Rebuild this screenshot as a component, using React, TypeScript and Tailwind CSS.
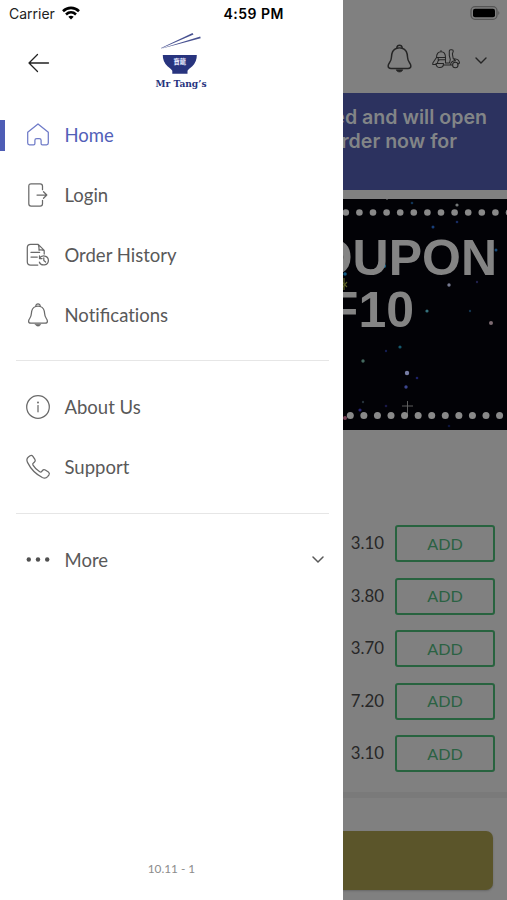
import type { ReactNode } from "react";

const LATO = "font-['Lato','Liberation_Sans',sans-serif]";
const INTER = "font-['Inter','Liberation_Sans',sans-serif]";

function Icon({ children, className = "" }: { children: ReactNode; className?: string }) {
  return (
    <svg
      viewBox="0 0 24 24"
      className={"h-6 w-6 shrink-0 overflow-visible " + className}
      fill="none"
      stroke="currentColor"
      strokeWidth="1.25"
      strokeLinecap="round"
      strokeLinejoin="round"
    >
      {children}
    </svg>
  );
}

function BellShape() {
  return (
    <>
      <path d="M9.800 3.500C6 4.600 5.400 7.800 5.300 11.100 5.200 15.200 2.600 15.600 2.600 18.200c0 1.400 1 2 2.300 2h14.200c1.300 0 2.300-.6 2.300-2 0-2.600-2.600-3-2.700-7.100-.1-3.300-.7-6.500-4.500-7.600Q12 2.900 9.800 3.500Z" />
      <path d="M9.800 3.300C9.700.2 14.300.2 14.200 3.300" />
      <path d="M9.300 21.300h5.400c-.5 2.500-4.900 2.500-5.400 0Z" fill="currentColor" strokeWidth=".5" />
    </>
  );
}

const icons = {
  home: (
    <Icon>
      <path d="M1.700 9.200 12 .9l10.300 8.300v10.900q0 1.700-1.700 1.700h-4.200q-1.300 0-1.300-1.300v-3.200q0-1.800-1.800-1.800h-2.600q-1.800 0-1.800 1.800v3.200q0 1.300-1.300 1.300H3.400q-1.700 0-1.700-1.700Z" />
    </Icon>
  ),
  login: (
    <Icon>
      <path d="M16.500 6.700V3.200q0-2.400-2.300-2.400H5.100Q2.800.8 2.800 3.200v17.600q0 2.400 2.300 2.400h9.100q2.300 0 2.300-2.400v-3.500M11 12h9.800M17.500 8.700l3.300 3.300-3.300 3.300" />
    </Icon>
  ),
  history: (
    <Icon>
      <path d="M11.800 22H4.600Q1.300 22 1.300 18.800V4.700Q1.300 1.400 4.600 1.400h7.600l6 6V11M12.200 1.400c1.200 3.600.8 4.600.8 5.800 1.600-.6 3.400-.3 5.200.3M5 9.400h8.600M5 14.100h6.300" />
      <path d="M13.600 15.200c2.100-3.700 8.600-2.700 8.800 2 .1 5.400-7.300 6.300-9 2M13.500 12.900v2.700h2.600M17.800 14.800v2.700l1.800 1.500" />
    </Icon>
  ),
  bell: (
    <Icon>
      <BellShape />
    </Icon>
  ),
  info: (
    <Icon>
      <circle cx="12" cy="12" r="11.300" />
      <path d="M12 10.500v6.300" />
      <circle cx="12" cy="7.400" r=".4" fill="currentColor" />
    </Icon>
  ),
  phone: (
    <Icon>
      <path d="M2.400 2.100 4.100.8c.9-.6 2.100-.4 2.800.5l2 3.100c.6.9.3 2.100-.6 2.800L7.400 8c-.8.6-.9 1.300-.4 2.100 1.800 2.900 3.800 5 6.700 6.700.8.5 1.600.3 2.100-.4l.7-.9c.7-.9 1.800-1.100 2.800-.5l3.100 2c1 .7 1.200 1.800.6 2.800l-1.400 1.800c-1.400 1.700-3.400 1.800-5.300.9C9.100 18.800 5.200 14.900 1.500 7.400c-.9-1.900-.8-3.900.9-5.300Z" />
    </Icon>
  ),
  more: (
    <Icon className="text-[#505050]">
      <g fill="currentColor" stroke="none">
        <circle cx="2.800" cy="11.500" r="2.200" />
        <circle cx="12" cy="11.500" r="2.200" />
        <circle cx="21.200" cy="11.500" r="2.200" />
      </g>
    </Icon>
  ),
};

function MenuItem({ icon, label, active = false, expandable = false }: { icon: ReactNode; label: ReactNode; active?: boolean; expandable?: boolean }) {
  return (
    <div className={"flex h-[60px] items-center " + (active ? "text-[#5260b8]" : "text-[#595959]")}>
      <div className={"h-[31px] w-[5px] shrink-0 " + (active ? "bg-[#4e5db5]" : "")} />
      <div className={"ml-[21px] flex " + (active ? "text-[#6f7bc8]" : "text-[#6a6a6a]")}>{icon}</div>
      <span className={"ml-[14.500px] text-[18.500px] leading-6 [font-variant-ligatures:none] " + LATO}>{label}</span>
      {expandable && (
        <svg viewBox="0 0 12 8" className="mr-[19px] ml-auto h-2 w-3" fill="none" stroke="currentColor" strokeWidth="1.500" strokeLinecap="round">
          <path d="m1 1 5 5 5-5" />
        </svg>
      )}
    </div>
  );
}

function Logo() {
  return (
    <svg viewBox="0 0 56 60" className="h-[60px] w-14" fill="#28347e">
      <path d="m8 17 31.500-15 1 1.500L8 17.500Zm2 0 37.200-11.500.5 1.700L9 17.500Z" opacity=".85" />
      <path d="M9.800 24h34q.2 6.500-4.500 11.200-3.800 2.800-4.800 4.600v3H19.300v-3q-1-1.800-4.800-4.600Q9.600 30.500 9.800 24Z" />
      <text x="20.500" y="32.700" fill="#e8eaff" fontSize="6.300" fontWeight="700" fontFamily="'Noto Sans CJK TC', sans-serif">
        寶龍
      </text>
      <text x="2.500" y="56" fontSize="10" fontWeight="700" fontFamily="'DejaVu Serif', serif" textLength="51" lengthAdjust="spacingAndGlyphs">
        Mr Tang’s
      </text>
    </svg>
  );
}

function Drawer() {
  return (
    <aside className="flex w-[343px] shrink-0 flex-col bg-white">
      <div className={"flex h-7 items-center pl-[9px] text-black " + INTER}>
        <span className="pb-px text-[14px] text-[#222]">Carrier</span>
        <svg viewBox="0 0 18 14" className="mb-[2px] ml-[7px] h-[14px] w-[18px]" fill="none" stroke="currentColor" strokeWidth="2.600">
          <path d="M1 5.200c4.600-4.400 11.400-4.400 16 0M4 8.500c3-2.800 7-2.800 10 0" />
          <path d="M6.300 10.800c1.700-1.500 3.700-1.500 5.400 0L9 13.500Z" fill="currentColor" stroke="none" />
        </svg>
        <span className="mr-[59px] ml-auto pb-px text-[14px] font-semibold tracking-[0.500px]">4:59 PM</span>
      </div>
      <header className="flex h-[77px] items-start">
        <svg viewBox="0 0 22 20" className="mt-[25px] ml-7 h-5 w-[22px]" fill="none" stroke="#222" strokeWidth="1.300" strokeLinecap="round" strokeLinejoin="round">
          <path d="M20.500 10H1M9.500 1.500 1 10l8.500 8.500" />
        </svg>
        <div className="mt-[3px] ml-[103px]">
          <Logo />
        </div>
      </header>
      <nav className="flex flex-col">
        <MenuItem icon={icons.home} label="Home" active />
        <MenuItem icon={icons.login} label="Login" />
        <MenuItem icon={icons.history} label="Order History" />
        <MenuItem
          icon={icons.bell}
          label={
            <>
              Noti<span className="[font-variant-ligatures:normal]">fi</span>cations
            </>
          }
        />
        <hr className="mt-[15px] mr-[14px] mb-4 ml-4 border-t border-[#e6e6e6]" />
        <MenuItem icon={icons.info} label="About Us" />
        <MenuItem icon={icons.phone} label="Support" />
        <hr className="mt-4 mr-[14px] mb-4 ml-4 border-t border-[#e6e6e6]" />
        <MenuItem icon={icons.more} label="More" expandable />
      </nav>
      <div className={"mt-auto mb-[22px] text-center text-[11.800px] leading-[18px] text-[#8c8c8c] " + LATO}>10.11 - 1</div>
    </aside>
  );
}

const stars: [number, number, number, string][] = [
  [44, 1, 1, "#555"], [69, 5, 1.300, "#103354"], [114, 7, 1.600, "#747878"], [90, 29, 1.500, "#183f79"],
  [114, 24, 1.300, "#172b61"], [41, 68, 2, "#176a96"], [2, 76, 1.800, "#145a83"], [153, 52, 1.500, "#164878"],
  [106, 87, 1.700, "#777b91"], [134, 84, 1.200, "#20204b"], [84, 113, 1.600, "#35717c"], [127, 113, 1.200, "#13334c"],
  [148, 125, 2, "#7d6b72"], [57, 149, 1.600, "#14586c"], [43, 153, 1.200, "#141d50"], [20, 163, 1.700, "#44695f"],
  [64, 175, 2.200, "#777da4"], [74, 180, 1.300, "#1c2167"], [63, 189, 1.700, "#3c468e"], [20, 204, 1.200, "#25323a"],
  [17, 212, 1.600, "#282677"], [43, 208, 1.300, "#191846"], [106, 228, 1.300, "#0b133b"], [2, 220, 2, "#754256"],
];

function CouponImage() {
  return (
    <div className="mt-[9px] grid h-[231px] shrink-0 grid-cols-[164px] overflow-hidden bg-[#020206]">
      <svg viewBox="0 0 164 232" className="col-start-1 row-start-1 -mt-px h-[232px] w-[164px]">
        {stars.map(([x, y, r, fill]) => (
          <circle key={x + "-" + y} cx={x} cy={y} r={r} fill={fill} />
        ))}
        <path d="m-2 83 6 6m-6 2 6-7m-3-4v12" stroke="#5c6127" strokeWidth="1.200" />
        <path d="M59 208h11M64.500 203v15" stroke="#666" strokeWidth=".9" />
        {Array.from({ length: 13 }, (_, i) => (
          <circle key={i} cx={2.800 + i * 13.600} cy={14.500} r={3.300} fill="#898989" />
        ))}
        {Array.from({ length: 12 }, (_, i) => (
          <circle key={i} cx={7.300 + i * 13.570} cy={217.500} r={3.500} fill="#898989" />
        ))}
      </svg>
      <div className="col-start-1 row-start-1 w-[164px] pt-[33px] font-['Liberation_Sans',sans-serif] text-[50px] leading-[52px] font-bold text-[#848484]">
        <div className="flex justify-end pr-[10px] whitespace-nowrap">COUPON</div>
        <div className="flex justify-end pr-[93px] whitespace-nowrap">OFF10</div>
      </div>
    </div>
  );
}

function MenuPage() {
  const prices = ["3.10", "3.80", "3.70", "7.20", "3.10"];
  return (
    <main className="flex w-[164px] flex-col overflow-hidden bg-[#808080]">
      <div className="flex h-7 shrink-0 items-center justify-end pr-[6px]">
        <svg viewBox="0 0 31 14" className="mb-[2px] h-[14px] w-[31px]">
          <rect x="1" y=".7" width="26" height="12.600" rx="4" fill="none" stroke="#555" strokeWidth="1.300" />
          <rect x="3" y="2.700" width="22" height="8.600" rx="2" fill="#000" />
          <path d="M28.300 5q2.200 2 0 4Z" fill="#555" />
        </svg>
      </div>
      <div className="flex h-[65px] shrink-0 items-start text-[#252525]">
        <svg viewBox="0 0 24 24" className="mt-4 ml-[42px] h-[29px] w-[29px]" fill="none" stroke="currentColor" strokeWidth="1.200" strokeLinejoin="round">
          <BellShape />
        </svg>
        <svg viewBox="0 0 28 20" className="mt-[21px] ml-[17.500px] h-5 w-7" fill="none" stroke="currentColor" strokeWidth="1.050" strokeLinecap="round" strokeLinejoin="round">
          <path d="M4.500 8.500C4.500 4.500 6.500 2.800 9 2.800s4.500 1.700 4.500 5.700ZM9 2.600V1.400M4.500 8.500.8 14v1.500H4M13.500 8.500V14M6.200 8.500v2.300H13M5.500 14q0-2.300 2-3.200M11.500 16H20M13.500 14h4l.8-3.500-1-4V2.200q0-1.500 1.500-1.500h1q1.500 0 1.500 1.500l-.9 2.600.8 4.700 2.300 2.300M18.500 16q.3-4.200 5-4.200M22 9.700q5.300.3 5.500 4.300l-1.500 1" />
          <path d="M4 14.500h7.500c0 5.400-7.500 5.400-7.500 0Z" />
          <circle cx="23.300" cy="16" r="2.700" />
        </svg>
        <svg viewBox="0 0 12 8" className="mt-[29px] ml-[15px] h-2 w-3" fill="none" stroke="currentColor" strokeWidth="1.400" strokeLinecap="round">
          <path d="m1 1 5 5 5-5" />
        </svg>
      </div>
      <div className={"h-[96.500px] shrink-0 bg-[#2c325f] pt-[13px] text-[19.600px] leading-[23.500px] font-semibold whitespace-nowrap text-[#828587] " + INTER}>
        <div className="flex justify-end pr-5">closed and will open</div>
        <div className="flex justify-end pr-[50px]">order now for</div>
      </div>
      <CouponImage />
      <div className="mt-[95.500px] flex flex-col gap-[15.500px] pr-[12px]">
        {prices.map((price, i) => (
          <div key={i} className={"flex h-[37px] items-center justify-end " + LATO}>
            <span className="mr-[11px] pb-px text-[16.800px] leading-6 text-[#272727]">{price}</span>
            <div className="flex h-[37px] w-[100px] items-center justify-center rounded-[3px] border-2 border-[#28633f] text-[16.200px] leading-6 text-[#2b6243]">ADD</div>
          </div>
        ))}
      </div>
      <div className="mt-5 h-[6px] shrink-0 bg-[#7a7a7a]" />
      <div className="mt-[33px] mr-[14.500px] h-[59px] shrink-0 rounded-r-[7px] bg-[#5b552a] shadow-[0_1px_2px_#666]" />
    </main>
  );
}

export default function App() {
  return (
    <div className="flex h-[900px] w-[507px] overflow-hidden">
      <Drawer />
      <MenuPage />
    </div>
  );
}
